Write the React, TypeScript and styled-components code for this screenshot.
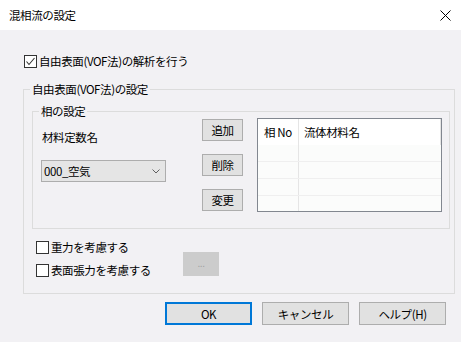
import React from 'react';
import styled, { createGlobalStyle } from 'styled-components';

const Global = createGlobalStyle`
  html, body { margin: 0; padding: 0; background: #f2f1f4; }
  body {
    font-family: "Noto Sans CJK JP", "Noto Sans", sans-serif;
    font-size: 11.5px;
    letter-spacing: -0.4px;
    color: #000;
  }
  button { letter-spacing: -0.4px; }
`;

const Window = styled.div`
  width: 461px;
  height: 342px;
  background: #f2f1f4;
  display: flex;
  flex-direction: column;
  overflow: hidden;
`;

const TitleBar = styled.div`
  height: 30px;
  flex-shrink: 0;
  background: #fff;
  display: flex;
  align-items: center;
  justify-content: space-between;
  padding: 0 10px 0 9px;
`;

const Title = styled.span`
  font-size: 11.5px;
  line-height: 16px;
`;

const Body = styled.div`
  display: flex;
  flex-direction: column;
  padding: 23px 6px 0 23px;
`;

const CheckRow = styled.label<{ $indent?: number }>`
  display: flex;
  align-items: center;
  gap: 2px;
  height: 16px;
  line-height: 16px;
  margin-left: ${p => p.$indent ?? 0}px;
  white-space: nowrap;
`;

const Box = styled.span`
  width: 11px;
  height: 11px;
  border: 1px solid #333;
  background: #fff;
  display: inline-flex;
  align-items: center;
  justify-content: center;
  flex-shrink: 0;
`;

const Group = styled.fieldset<{ $mt: number; $ml: number; $mr: number }>`
  margin: ${p => p.$mt}px ${p => p.$mr}px 0 ${p => p.$ml}px;
  padding: 0;
  border: 1px solid #dcdcdc;
  min-width: 0;
`;

const Legend = styled.legend`
  margin-left: 6px;
  padding: 0 2px;
  font-size: 11.5px;
  line-height: 16px;
`;

const PhaseRow = styled.div`
  display: flex;
  align-items: flex-start;
  padding: 0 7px 16px 8px;
`;

const LeftCol = styled.div`
  width: 125px;
  display: flex;
  flex-direction: column;
`;

const FieldLabel = styled.div`
  margin: 10px 0 0 1px;
  line-height: 16px;
`;

const Combo = styled.div`
  margin-top: 15px;
  height: 20px;
  border: 1px solid #adadad;
  background: #e5e5e5;
  display: flex;
  align-items: center;
  justify-content: space-between;
  padding: 0 5px 0 2px;
  line-height: 16px;
`;

const ButtonCol = styled.div`
  margin-left: 36px;
  height: 92px;
  display: flex;
  flex-direction: column;
  justify-content: space-between;
`;

const SmallButton = styled.button`
  width: 41px;
  height: 22px;
  padding: 0;
  border: 1px solid #adadad;
  background: #e1e1e1;
  font-family: inherit;
  font-size: 11.5px;
  line-height: 16px;
  color: #000;
`;

const List = styled.div`
  margin: -1px 0 0 14px;
  width: 183px;
  height: 92px;
  border: 1px solid #828790;
  background: #fbfcfb;
  display: flex;
  flex-direction: column;
`;

const ListRow = styled.div<{ $h: number; $line?: boolean }>`
  height: ${p => p.$h}px;
  flex-shrink: 0;
  display: grid;
  grid-template-columns: 41px 1fr;
  box-sizing: border-box;
  border-bottom: ${p => (p.$line ? '1px solid #efefef' : 'none')};
`;

const Cell = styled.div<{ $head?: boolean; $first?: boolean; $last?: boolean }>`
  background: ${p => (p.$head ? '#ffffff' : 'transparent')};
  border-right: ${p => (p.$first ? '1px solid #e5e5e5' : 'none')};
  box-shadow: ${p => (p.$last ? 'inset -1px 0 0 #e5e5e5' : 'none')};
  padding-left: ${p => (p.$first ? 6 : 5)}px;
  line-height: 26px;
  white-space: nowrap;
`;

const OptionsRow = styled.div`
  display: flex;
  align-items: flex-end;
  padding: 10px 0 15px 12px;
`;

const OptionCol = styled.div`
  width: 147px;
  display: flex;
  flex-direction: column;
  gap: 7px;
`;

const DotsButton = styled.button`
  width: 36px;
  height: 24px;
  margin-bottom: 2px;
  padding: 0;
  border: 1px solid #cccccc;
  background: #cccccc;
  color: #a0a0a0;
  font-family: "Liberation Sans", sans-serif;
  font-size: 10px;
  line-height: 12px;
`;

const Footer = styled.div`
  display: flex;
  justify-content: flex-end;
  gap: 10px;
  margin-top: 8px;
  padding-right: 9px;
`;

const DialogButton = styled.button<{ $default?: boolean }>`
  width: 87px;
  height: 23px;
  padding: 0;
  box-sizing: border-box;
  border: ${p => (p.$default ? '2px solid #0078d7' : '1px solid #adadad')};
  background: #e1e1e1;
  font-family: inherit;
  font-size: 11.5px;
  line-height: 16px;
  color: #000;
`;

const Check = () => (
  <svg width="11" height="11" viewBox="0 0 11 11">
    <polyline points="1.5,5.5 4,8.5 9.5,2" fill="none" stroke="#333" strokeWidth="1.1" />
  </svg>
);

const CloseIcon = () => (
  <svg width="11" height="11" viewBox="0 0 11 11">
    <path d="M0.5 0.5 L10.5 10.5 M10.5 0.5 L0.5 10.5" stroke="#000" strokeWidth="1" />
  </svg>
);

const Chevron = () => (
  <svg width="8" height="5" viewBox="0 0 8 5">
    <polyline points="0.5,0.5 4,4 7.5,0.5" fill="none" stroke="#606060" strokeWidth="1" />
  </svg>
);

export default function App() {
  return (
    <>
      <Global />
      <Window>
        <TitleBar>
          <Title>混相流の設定</Title>
          <CloseIcon />
        </TitleBar>
        <Body>
          <CheckRow $indent={1}>
            <Box><Check /></Box>
            自由表面(VOF法)の解析を行う
          </CheckRow>
          <Group $mt={12} $ml={0} $mr={0}>
            <Legend>自由表面(VOF法)の設定</Legend>
            <Group $mt={6} $ml={8} $mr={4}>
              <Legend>相の設定</Legend>
              <PhaseRow>
                <LeftCol>
                  <FieldLabel>材料定数名</FieldLabel>
                  <Combo>
                    <span>000_空気</span>
                    <Chevron />
                  </Combo>
                </LeftCol>
                <ButtonCol>
                  <SmallButton>追加</SmallButton>
                  <SmallButton>削除</SmallButton>
                  <SmallButton>変更</SmallButton>
                </ButtonCol>
                <List>
                  <ListRow $h={26}>
                    <Cell $head $first>相 No</Cell>
                    <Cell $head $last>流体材料名</Cell>
                  </ListRow>
                  <ListRow $h={17} $line>
                    <Cell $first />
                    <Cell />
                  </ListRow>
                  <ListRow $h={17} $line>
                    <Cell $first />
                    <Cell />
                  </ListRow>
                  <ListRow $h={17} $line>
                    <Cell $first />
                    <Cell />
                  </ListRow>
                  <ListRow $h={15}>
                    <Cell $first />
                    <Cell />
                  </ListRow>
                </List>
              </PhaseRow>
            </Group>
            <OptionsRow>
              <OptionCol>
                <CheckRow>
                  <Box />
                  重力を考慮する
                </CheckRow>
                <CheckRow>
                  <Box />
                  表面張力を考慮する
                </CheckRow>
              </OptionCol>
              <DotsButton disabled>...</DotsButton>
            </OptionsRow>
          </Group>
          <Footer>
            <DialogButton $default>OK</DialogButton>
            <DialogButton>キャンセル</DialogButton>
            <DialogButton>ヘルプ(H)</DialogButton>
          </Footer>
        </Body>
      </Window>
    </>
  );
}
